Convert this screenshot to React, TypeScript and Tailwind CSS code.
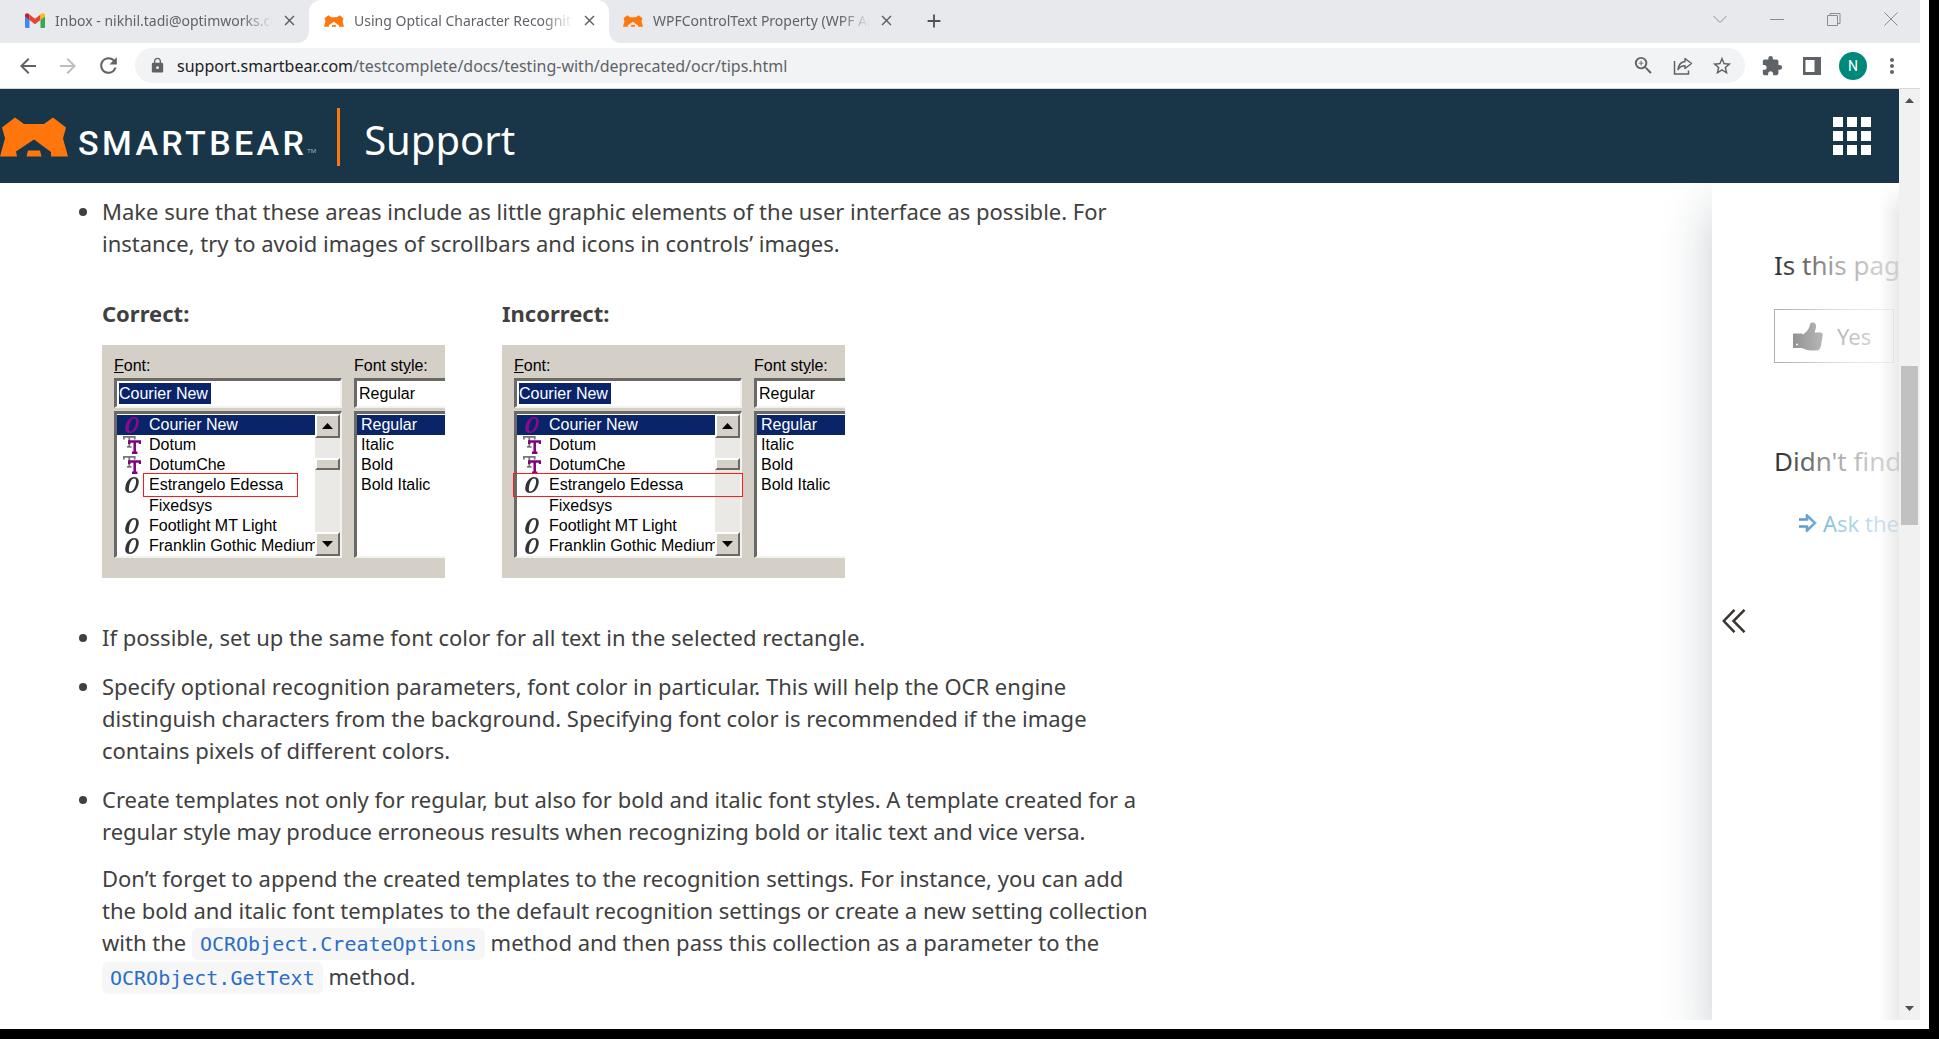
import type { ReactNode } from 'react';
import {
  MdArrowBack,
  MdArrowForward,
  MdRefresh,
  MdLock,
  MdZoomIn,
  MdStarBorder,
  MdExtension,
  MdMoreVert,
  MdClose,
  MdAdd,
} from 'react-icons/md';

function Bear({ className }: { className: string }) {
  return (
    <svg viewBox="0 0 68 40" className={className} fill="#ff760d" aria-hidden="true">
      <path d="M0 39.500 5 21.500 2 10.500 15 .500 24 7H44L53 .500 66 10.500 63 21.500 68 39.500H51V35L34 22.500 16 34.500 17 39.500Z" />
      <path d="M28 33.500H40L41.500 39.500H26.500Z" />
    </svg>
  );
}

function Gmail() {
  return (
    <svg viewBox="0 0 20 15" className="h-[15px] w-5 shrink-0" aria-hidden="true">
      <path d="M0 3 4.500 6.500V15H1.500A1.500 1.500 0 0 1 0 13.500Z" fill="#4285f4" />
      <path d="M20 3 15.500 6.500V15H18.500A1.500 1.500 0 0 0 20 13.500Z" fill="#34a853" />
      <path d="M4.500 1.500 10 5.700 15.500 1.500V7L10 11.200 4.500 7Z" fill="#ea4335" />
      <path d="M0 3.500V2.200C0 .300 2-.500 3.600.800L4.500 1.500V7Z" fill="#c5221f" />
      <path d="M20 3.500V2.200C20 .300 18-.500 16.400.800L15.500 1.500V7Z" fill="#fbbc04" />
    </svg>
  );
}

function Tab({ icon, title, close }: { icon: ReactNode; title: string; close: string }) {
  return (
    <>
      <button type="button" className="flex min-w-0 flex-1 items-center gap-2.5">
        {icon}
        <span className="min-w-0 flex-1 overflow-hidden whitespace-nowrap text-left text-sm text-[#5f6368] [mask-image:linear-gradient(to_right,black_86%,transparent)]">
          {title}
        </span>
      </button>
      <button type="button" aria-label={close} className="ml-2 text-[#5b5e63]">
        <MdClose size={17} />
      </button>
    </>
  );
}

function TabStrip() {
  return (
    <div className="flex h-[43px] bg-white">
      <div className="flex w-[309px] items-center rounded-br-xl bg-[#e7e9ec] pb-0.5 pl-[25px] pr-[11px]">
        <Tab icon={<Gmail />} title="Inbox - nikhil.tadi@optimworks.com" close="Close inbox tab" />
      </div>
      <div className="w-[300px] bg-[#e7e9ec]">
        <div className="flex h-full items-center rounded-t-xl bg-white pb-0.5 pl-[15px] pr-[11px]">
          <Tab
            icon={<Bear className="h-3 w-5 shrink-0" />}
            title="Using Optical Character Recognition"
            close="Close active tab"
          />
        </div>
      </div>
      <div className="flex flex-1 items-center justify-between rounded-bl-xl bg-[#e7e9ec] pb-0.5">
        <div className="flex items-center">
          <div className="flex w-[298px] items-center pl-[14px] pr-3">
            <Tab
              icon={<Bear className="h-3 w-5 shrink-0" />}
              title="WPFControlText Property (WPF Apps)"
              close="Close third tab"
            />
          </div>
          <button type="button" aria-label="New tab" className="ml-4 text-[#4f5257]">
            <MdAdd size={22} />
          </button>
        </div>
        <div className="flex gap-[43px] pr-[22px] pb-1 text-[#8a8c8f]">
          <button type="button" aria-label="Search tabs">
            <svg width="14" height="14" fill="none" stroke="currentColor">
              <path d="M.5 4 7 10.500 13.500 4" />
            </svg>
          </button>
          <button type="button" aria-label="Minimize">
            <svg width="14" height="14" fill="none" stroke="currentColor">
              <path d="M0 7.500H14" />
            </svg>
          </button>
          <button type="button" aria-label="Restore">
            <svg width="14" height="14" fill="none" stroke="currentColor">
              <path d="M.5 3.500H10.500V13.500H.5ZM3 3.500V1.500H13V11.500H10.500" />
            </svg>
          </button>
          <button type="button" aria-label="Close window">
            <svg width="14" height="14" fill="none" stroke="currentColor">
              <path d="M.5 .5 13.500 13.500M13.500 .5 .5 13.500" />
            </svg>
          </button>
        </div>
      </div>
    </div>
  );
}

function Toolbar() {
  return (
    <div className="flex h-[46px] items-center border-b border-[#d5d7da] px-4 text-[#5f6368]">
      <div className="flex gap-4">
        <button type="button" aria-label="Back">
          <MdArrowBack size={24} />
        </button>
        <button type="button" aria-label="Forward" className="text-[#bcbec1]">
          <MdArrowForward size={24} />
        </button>
        <button type="button" aria-label="Reload">
          <MdRefresh size={25} />
        </button>
      </div>
      <div className="ml-[14px] flex h-[35px] flex-1 items-center rounded-full bg-[#f1f3f4] pl-[14px] pr-3">
        <MdLock size={17} className="shrink-0" />
        <button type="button" className="ml-[11px] flex-1 text-left text-base">
          <span className="text-[#202124]">support.smartbear.com</span>
          /testcomplete/docs/testing-with/deprecated/ocr/tips.html
        </button>
        <div className="flex items-center gap-[18px]">
          <button type="button" aria-label="Zoom">
            <MdZoomIn size={23} />
          </button>
          <button type="button" aria-label="Share">
            <svg width="20" height="20" viewBox="0 0 20 20" fill="none" stroke="currentColor" strokeWidth="1.500">
              <path d="M1.500 5V18H15.500V14.500" />
              <path d="M12 2.500 18.500 7.500 12 12.500V9.700C8.500 9.700 6.500 11 5 13.500 5.500 9 8 6 12 5.500Z" strokeLinejoin="round" />
            </svg>
          </button>
          <button type="button" aria-label="Bookmark">
            <MdStarBorder size={22} />
          </button>
        </div>
      </div>
      <div className="flex items-center pl-4">
        <button type="button" aria-label="Extensions">
          <MdExtension size={22} />
        </button>
        <button type="button" aria-label="Side panel" className="ml-5">
          <svg width="18" height="18" fill="currentColor">
            <path d="M0 0H18V18H0ZM2.500 3V15H11.500V3Z" fillRule="evenodd" />
          </svg>
        </button>
        <button
          type="button"
          className="ml-[18px] size-7 rounded-full bg-[#00897b] font-['Roboto',sans-serif] text-sm text-white"
        >
          N
        </button>
        <button type="button" aria-label="Menu" className="ml-[13px]">
          <MdMoreVert size={24} />
        </button>
      </div>
    </div>
  );
}

function SiteHeader() {
  return (
    <header className="flex h-[94px] items-center justify-between bg-[#183648] pr-7 text-white">
      <div className="flex items-center pt-px">
        <a href="#home" className="flex items-center gap-[10px]">
          <Bear className="h-10 w-[68px]" />
          <span className="pt-3 font-['Roboto',sans-serif] text-[34px] leading-10 font-medium tracking-widest">
            SMARTBEAR
          </span>
        </a>
        <span className="self-end pb-3 text-[6px] leading-none text-[#a9b5bc]">TM</span>
        <span className="ml-[21px] h-[58px] w-[3px] bg-[#ff760d]" />
        <span className="ml-6 pt-1.5 text-[40px] leading-[48px]">Support</span>
      </div>
      <button type="button" aria-label="Products" className="grid grid-cols-3 gap-1">
        {Array.from({ length: 9 }, (_, i) => (
          <span key={i} className="size-2.5 bg-white" />
        ))}
      </button>
    </header>
  );
}

function OIcon({ color }: { color: string }) {
  return (
    <svg viewBox="0 0 18 18" className="size-[18px]" aria-hidden="true">
      <path
        d="M11 1C15 1 16.500 4 15.500 8 14.500 13 11 17 7 17 3 17 1.500 14 2.500 10 3.500 5 7 1 11 1ZM11 2.500C9 2.500 7 6 6.200 10 5.500 13.500 5.800 15.500 7.200 15.500 9.500 15.500 12 12 12.800 8 13.500 4.500 13 2.500 11 2.500Z"
        fill={color}
        fillRule="evenodd"
      />
    </svg>
  );
}

function TTIcon() {
  return (
    <svg viewBox="0 0 20 20" className="h-5 w-[18px]" aria-hidden="true">
      <path d="M1 4V1H13V4M7 1V12M4.500 12H9.500" fill="none" stroke="#777" strokeWidth="2" />
      <path d="M7 9V6H19V9M13 6V18M10 18.500H16" fill="none" stroke="#800080" strokeWidth="2.800" />
    </svg>
  );
}

const fontRows: { name: string; icon?: 'o' | 'tt' }[] = [
  { name: 'Courier New', icon: 'o' },
  { name: 'Dotum', icon: 'tt' },
  { name: 'DotumChe', icon: 'tt' },
  { name: 'Estrangelo Edessa', icon: 'o' },
  { name: 'Fixedsys' },
  { name: 'Footlight MT Light', icon: 'o' },
  { name: 'Franklin Gothic Medium', icon: 'o' },
];

const sunken =
  'border-t-3 border-l-3 border-b-2 border-r-2 border-t-[#6b6965] border-l-[#6b6965] border-b-[#f4f2ee] border-r-[#f4f2ee] bg-white';
const raised = 'border-2 border-t-white border-l-white border-b-[#6b6965] border-r-[#6b6965] bg-[#d4d0c8]';

function FontDialog({ id, wide }: { id: string; wide: boolean }) {
  return (
    <div className="flex h-[233px] w-[343px] gap-3 overflow-hidden bg-[#d4d0c8] pt-[11px] pl-3 font-['Liberation_Sans',sans-serif] text-base text-black">
      <div className="w-[228px] shrink-0">
        <label htmlFor={id + '-font'} className="block h-[22px] leading-5">
          <u>F</u>ont:
        </label>
        <div className={'flex h-[30px] items-center pl-0.5 ' + sunken}>
          <input
            id={id + '-font'}
            readOnly
            value="Courier New"
            className="h-[21px] w-[92px] bg-[#0a246a] text-white outline-none"
          />
        </div>
        <div className={'mt-[3px] flex h-[147px] ' + sunken}>
          <ul className="flex min-w-0 flex-1 flex-col pt-px">
            {fontRows.map((row, i) => (
              <li
                key={row.name}
                className={'relative flex flex-1 items-center ' + (i === 0 ? 'bg-[#0a246a] text-white' : '')}
              >
                <span className="flex w-8 shrink-0 pl-[6px]">
                  {row.icon === 'o' && <OIcon color={i === 0 ? '#8b0a8b' : '#333'} />}
                  {row.icon === 'tt' && <TTIcon />}
                </span>
                <span className="overflow-hidden whitespace-nowrap leading-5">{row.name}</span>
                {i === 3 && (
                  <span
                    className={
                      'absolute z-10 h-6 border border-[#ff1a1a] ' +
                      (wide ? '-left-1 w-[230px]' : 'left-[26px] w-[155px]')
                    }
                  />
                )}
              </li>
            ))}
          </ul>
          <div className="flex w-[25px] shrink-0 flex-col justify-between bg-[#ebe9e5]">
            <button type="button" aria-label="Scroll up" className={'flex h-6 items-center justify-center ' + raised}>
              <svg width="11" height="6">
                <path d="M0 6 5.500 0 11 6Z" />
              </svg>
            </button>
            <div className={'mb-[42px] h-3 ' + raised} />
            <button type="button" aria-label="Scroll down" className={'flex h-6 items-center justify-center ' + raised}>
              <svg width="11" height="6">
                <path d="M0 0H11L5.500 6Z" />
              </svg>
            </button>
          </div>
        </div>
      </div>
      <div className="w-[150px] shrink-0">
        <label htmlFor={id + '-style'} className="block h-[22px] leading-5">
          Font st<u>y</u>le:
        </label>
        <div className={'flex h-[30px] items-center pl-0.5 ' + sunken}>
          <input id={id + '-style'} readOnly value="Regular" className="w-20 outline-none" />
        </div>
        <ul className={'mt-[3px] h-[147px] pt-px leading-5 ' + sunken}>
          <li className="bg-[#0a246a] pl-1 text-white">Regular</li>
          <li className="pl-1">Italic</li>
          <li className="pl-1">Bold</li>
          <li className="pl-1">Bold Italic</li>
        </ul>
      </div>
    </div>
  );
}

function Code({ children }: { children: string }) {
  return (
    <a
      href="#method"
      className="inline-block rounded-md bg-[#f6f6f7] px-2 font-['DejaVu_Sans_Mono',monospace] text-xl leading-8 text-[#2a6ec6]"
    >
      {children}
    </a>
  );
}

function Article() {
  return (
    <article className="min-w-0 flex-1 pt-3 pl-[102px] text-[22px] leading-8 text-[#404040]">
      <ul className="flex max-w-[1060px] list-disc flex-col gap-[17px]">
        <li>
          <p>
            Make sure that these areas include as little graphic elements of the user interface as possible. For
            <br />
            instance, try to avoid images of scrollbars and icons in controls’ images.
          </p>
          <div className="flex gap-[57px] pt-[38px] pb-[26px]">
            <div>
              <h4 className="mb-4 font-bold">Correct:</h4>
              <FontDialog id="correct" wide={false} />
            </div>
            <div>
              <h4 className="mb-4 font-bold">Incorrect:</h4>
              <FontDialog id="incorrect" wide />
            </div>
          </div>
        </li>
        <li>If possible, set up the same font color for all text in the selected rectangle.</li>
        <li>
          Specify optional recognition parameters, font color in particular. This will help the OCR engine
          <br />
          distinguish characters from the background. Specifying font color is recommended if the image
          <br />
          contains pixels of different colors.
        </li>
        <li>
          <p>
            Create templates not only for regular, but also for bold and italic font styles. A template created for a
            <br />
            regular style may produce erroneous results when recognizing bold or italic text and vice versa.
          </p>
          <p className="mt-[15px]">
            Don’t forget to append the created templates to the recognition settings. For instance, you can add
            <br />
            the bold and italic font templates to the default recognition settings or create a new setting collection
            <br />
            with the <Code>OCRObject.CreateOptions</Code> method and then pass this collection as a parameter to the
            <br />
            <Code>OCRObject.GetText</Code> method.
          </p>
        </li>
      </ul>
    </article>
  );
}

function Feedback() {
  return (
    <aside className="relative w-[187px] shrink-0 bg-white shadow-[0_24px_48px_rgba(24,44,62,0.24)]">
      <div className="overflow-hidden pt-16 pl-[62px] whitespace-nowrap text-[#333]">
        <h3 className="text-[26px] leading-9">Is this page</h3>
        <button
          type="button"
          className="mt-[26px] flex h-[54px] w-[120px] items-center gap-[14px] border border-[#b0b0b0] pl-[18px] text-[22px] text-[#555]"
        >
          <svg width="30" height="29" viewBox="0 0 30 29" fill="#808080">
            <path
              d="M1 11.500H7.500C9 11.500 9.500 12 10 12.500 12.500 11 15.500 8 16.500 4.500 17 1.500 17.500 .5 19.500 .5 22 .5 23.300 2.500 23 5 22.800 7.200 22 8.800 21.500 10.500H27.500C29 10.500 30 11.800 29.700 13.500L28 23.500C27.500 27 26 28.500 23 28.500H18C14.500 28.500 12 27.500 9 26H1C.4 26 0 25.600 0 25V12.500C0 11.900 .4 11.500 1 11.500ZM4 21.500A1 1 0 1 0 4 23.500 1 1 0 1 0 4 21.500Z"
              fillRule="evenodd"
            />
          </svg>
          Yes
        </button>
        <h3 className="mt-20 text-[26px] leading-9">Didn't find</h3>
        <a href="#ask" className="mt-[26px] flex items-center gap-1.5 pl-[25px] text-[22px] leading-9 text-[#1286b8]">
          <svg width="18" height="18" viewBox="0 0 18 18" className="shrink-0" fill="#fff" stroke="#2c7cc0" strokeWidth="2.500">
            <path d="M0 5.500H8V1.500L16 9 8 16.500V12.500H0" />
          </svg>
          Ask the
        </a>
      </div>
      <div className="pointer-events-none absolute inset-y-0 right-0 w-[120px] bg-linear-to-r from-white/0 via-white/60 to-white/85" />
      <div className="pointer-events-none absolute inset-y-0 right-0 w-5 bg-linear-to-r from-black/0 to-black/8 [mask-image:linear-gradient(to_bottom,transparent,black_30px)]" />
      <button type="button" aria-label="Expand panel" className="mt-[68px] ml-[10px] block">
        <svg width="24" height="24" fill="none" stroke="#3a3632" strokeWidth="2.500">
          <path d="M12.500 .8 1.800 12 12.500 23.200M22.500 .8 11.500 12 22.500 23.200" />
        </svg>
      </button>
    </aside>
  );
}

function Scrollbar() {
  return (
    <div className="flex w-[21px] shrink-0 flex-col items-center bg-[#f1f1f1] py-[9px]">
      <svg width="9" height="5" fill="#505050">
        <path d="M0 5 4.500 0 9 5Z" />
      </svg>
      <div className="mt-[263px] h-[159px] w-[17px] bg-[#c1c1c1]" />
      <svg width="9" height="5" fill="#505050" className="mt-auto">
        <path d="M0 0H9L4.500 5Z" />
      </svg>
    </div>
  );
}

export default function App() {
  return (
    <div className="flex min-h-screen flex-col bg-black pr-[10px] pb-[10px] font-['Noto_Sans',sans-serif]">
      <div className="flex flex-1 flex-col bg-white pr-[9px] pb-[9px]">
        <TabStrip />
        <Toolbar />
        <div className="flex flex-1">
          <div className="flex min-w-0 flex-1 flex-col">
            <SiteHeader />
            <div className="flex flex-1 overflow-hidden">
              <Article />
              <Feedback />
            </div>
          </div>
          <Scrollbar />
        </div>
      </div>
    </div>
  );
}
